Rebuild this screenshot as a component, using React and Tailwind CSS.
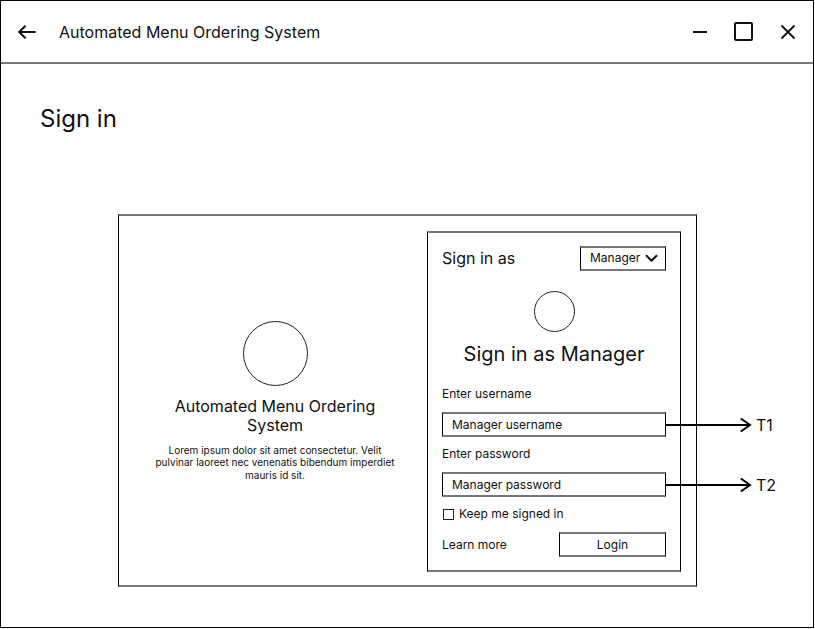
import React from "react";

function BackArrow() {
  return (
    <svg width="18" height="14" viewBox="0 0 18 14" fill="none" stroke="#111" strokeWidth="2" strokeLinecap="round" strokeLinejoin="round">
      <path d="M17 7H1.5" />
      <path d="M7 1.2L1.2 7L7 12.8" />
    </svg>
  );
}

function Chevron() {
  return (
    <svg width="13" height="9" viewBox="0 0 13 9" fill="none" stroke="#111" strokeWidth="2" strokeLinecap="round" strokeLinejoin="round">
      <path d="M1.5 1.8L6.5 6.8L11.5 1.8" />
    </svg>
  );
}

function Arrow({ label }) {
  return (
    <div className="absolute left-full top-1/2 -translate-y-1/2 flex items-center">
      <svg width="87" height="14" viewBox="0 0 87 14" fill="none" stroke="#000" strokeWidth="2" strokeLinejoin="miter">
        <path d="M0 7H85" />
        <path d="M76.5 1L85 7L76.5 13" strokeLinecap="round" />
      </svg>
      <span className="ml-[4px] text-[16px] leading-[20px] text-[#111]">{label}</span>
    </div>
  );
}

export default function App() {
  return (
    <div className="w-[815px] h-[629px] bg-white font-[Inter] text-[#111]">
      <div className="w-[814px] h-[628px] border border-black flex flex-col">
        {/* Header */}
        <div className="h-[63px] shrink-0 border-b-2 border-b-[#777] flex items-center">
          <div className="ml-[17px] flex items-center">
            <BackArrow />
          </div>
          <div className="ml-[23px] text-[16px] leading-[20px]">Automated Menu Ordering System</div>
          <div className="ml-auto mr-[17px] flex items-center">
            <svg width="16" height="16" viewBox="0 0 16 16" fill="none" stroke="#111" strokeWidth="2">
              <path d="M1 8H15" />
            </svg>
            <svg className="ml-[26px]" width="19" height="19" viewBox="0 0 19 19" fill="none" stroke="#111" strokeWidth="2">
              <rect x="1" y="1" width="17" height="17" rx="1" />
            </svg>
            <svg className="ml-[27px]" width="16" height="16" viewBox="0 0 16 16" fill="none" stroke="#111" strokeWidth="1.8" strokeLinecap="round">
              <path d="M2 2L14 14M14 2L2 14" />
            </svg>
          </div>
        </div>

        {/* Body */}
        <div className="flex flex-col pl-[39px] pt-[39px]">
          <div className="text-[24px] leading-[32px]">Sign in</div>
        </div>

        <div className="ml-[117px] mt-[79px] w-[579px] h-[373px] border-x border-x-black border-y-2 border-y-[#777] flex pt-[15px] pr-[15px] pb-[14px]">
          {/* Left column */}
          <div className="flex-1 flex flex-col items-center justify-center pl-[4px]">
            <div className="w-[65px] h-[65px] rounded-full border border-[#222]" />
            <div className="mt-[11px] w-[250px] text-center text-[16px] leading-[19px]">
              Automated Menu Ordering System
            </div>
            <div className="mt-[9px] w-[246px] text-center text-[10px] leading-[12.5px]">
              Lorem ipsum dolor sit amet consectetur. Velit pulvinar laoreet nec venenatis bibendum imperdiet mauris id sit.
            </div>
          </div>

          {/* Right panel */}
          <div className="w-[254px] h-[341px] border-x border-x-black border-y-2 border-y-[#777] flex flex-col px-[14px] pt-[13px]">
            <div className="h-[24px] flex items-center justify-between">
              <span className="text-[16px] leading-[20px]">Sign in as</span>
              <div className="w-[86px] h-[25px] border-x border-x-black border-y-2 border-y-[#777] flex items-center pl-[9px] gap-[5px]">
                <span className="text-[12px] leading-[16px]">Manager</span>
                <Chevron />
              </div>
            </div>
            <div className="mt-[21px] self-center w-[41px] h-[41px] rounded-full border border-[#222]" />
            <div className="mt-[10px] text-center text-[20px] leading-[24px]">Sign in as Manager</div>

            <div className="mt-[20px] text-[12px] leading-[16px]">Enter username</div>
            <div className="relative mt-[10px] h-[25px] border-x border-x-black border-y-2 border-y-[#777] flex items-center pl-[9px] text-[12px] leading-[16px]">
              Manager username
              <Arrow label="T1" />
            </div>

            <div className="mt-[9px] text-[12px] leading-[16px]">Enter password</div>
            <div className="relative mt-[10px] h-[25px] border-x border-x-black border-y-2 border-y-[#777] flex items-center pl-[9px] text-[12px] leading-[16px]">
              Manager password
              <Arrow label="T2" />
            </div>

            <div className="mt-[9px] h-[16px] flex items-center">
              <div className="ml-[1px] w-[11px] h-[11px] border border-[#222]" />
              <span className="ml-[5px] text-[12px] leading-[16px]">Keep me signed in</span>
            </div>

            <div className="mt-[10px] h-[25px] flex items-center justify-between">
              <span className="text-[12px] leading-[16px]">Learn more</span>
              <div className="w-[107px] h-[25px] border-x border-x-black border-y-2 border-y-[#777] flex items-center justify-center text-[12px] leading-[16px]">
                Login
              </div>
            </div>
          </div>
        </div>
      </div>
    </div>
  );
}
